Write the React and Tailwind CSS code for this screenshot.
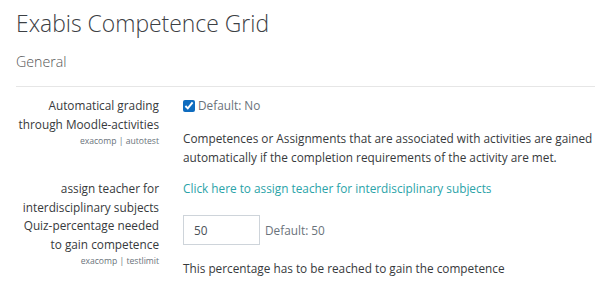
export default function App() {
  const font = { fontFamily: '"Open Sans", "Noto Sans", sans-serif' };
  return (
    <main className="min-h-[292px] w-[595px] bg-white pl-4 pt-[8px] text-[#373a3c]" style={font}>
      <h2 className="text-[22.9px] font-light leading-[32px] text-[#3c4044]">Exabis Competence Grid</h2>
      <h3 className="mt-[12px] text-[14.2px] font-light leading-[20px] text-[#555]">General</h3>
      <div className="mt-[14px] border-t border-[#e6e6e6]" />

      <div className="mt-[9px] grid grid-cols-[143px_1fr] gap-x-6 whitespace-nowrap">
        <div className="text-right text-[11.8px] leading-[19px]">
          <div>Automatical grading</div>
          <div>through Moodle-activities</div>
          <div className="text-[8.6px] leading-[15px] text-[#6a737b]">exacomp | autotest</div>
        </div>
        <div className="text-[11.8px] leading-[19px]">
          <label className="flex items-center gap-[3px] text-[#6a737b]">
            <input type="checkbox" defaultChecked className="h-[12px] w-[12px] accent-[#0f6cbf]" />
            Default: No
          </label>
          <p className="mt-[14px] whitespace-normal">
            Competences or Assignments that are associated with activities are gained automatically if the completion requirements of the activity are met.
          </p>
        </div>

        <div className="mt-[12px] text-right text-[11.8px] leading-[19px]">
          <div>assign teacher for</div>
          <div>interdisciplinary subjects</div>
        </div>
        <div className="mt-[12px] text-[11.8px] leading-[19px]">
          <a href="#" className="text-[#2aa3a8]">Click here to assign teacher for interdisciplinary subjects</a>
        </div>

        <div className="-mt-[1px] text-right text-[11.8px] leading-[19px]">
          <div>Quiz-percentage needed</div>
          <div>to gain competence</div>
          <div className="text-[8.6px] leading-[15px] text-[#6a737b]">exacomp | testlimit</div>
        </div>
        <div className="-mt-[2px] text-[11.8px] leading-[19px]">
          <div className="flex items-center gap-[5px]">
            <input
              type="text"
              defaultValue="50"
              className="h-[30px] w-[77px] border border-[#ced4da] px-[10px] text-[11.8px] text-[#495057] outline-none"
            />
            <span className="text-[#6a737b]">Default: 50</span>
          </div>
          <p className="mt-[14px]">This percentage has to be reached to gain the competence</p>
        </div>
      </div>
    </main>
  );
}
